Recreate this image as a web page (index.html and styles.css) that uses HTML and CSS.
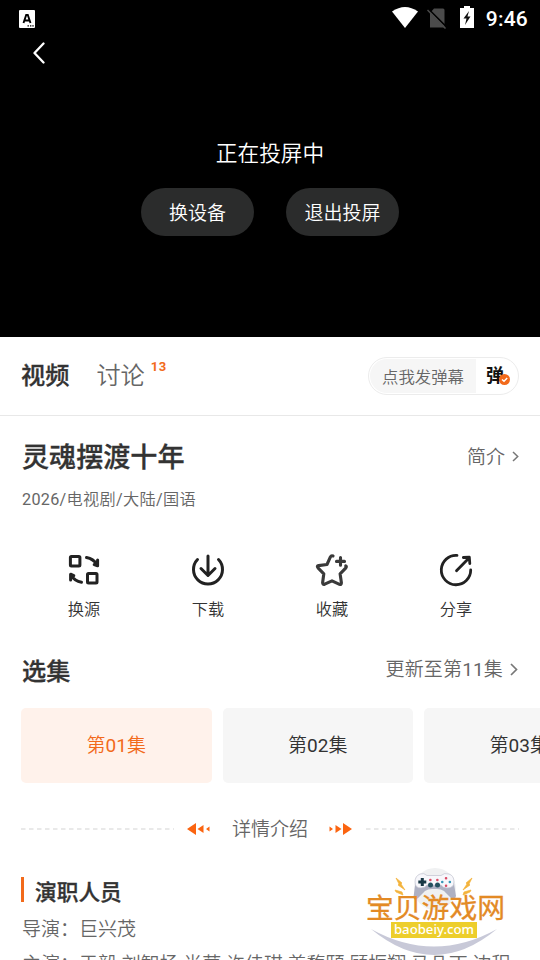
FILE: index.html
```html
<!DOCTYPE html>
<html lang="zh-CN">
<head>
<meta charset="utf-8">
<title>灵魂摆渡十年</title>
<link rel="stylesheet" href="styles.css">
</head>
<body>
<div class="screen">
  <section class="player">
    <header class="status">
      <svg class="status-app" width="16" height="18" viewBox="0 0 16 18"><rect width="16" height="18" rx="1" fill="#fff"/><path d="M4.500 13 7.200 5h1.600l2.700 8M5.800 10.500h4.400" fill="none" stroke="#000" stroke-width="1.900"/><path d="M8.500 15.800h1.400M11 15.800h1.400M13.300 15.800h1.400" stroke="#000" stroke-width="1.300"/></svg>
      <svg class="wifi" width="26" height="21" viewBox="0 0 26 21"><path d="M0 4.500Q13-4.500 26 4.500L13 21Z" fill="#fff"/></svg>
      <svg class="nosim" width="20" height="21" viewBox="0 0 20 21"><path d="M7 .5h9q1.500 0 1.500 1.500v17.500H3V5Z" fill="#4b4b4b"/><path d="M1.500 1 19.500 19" stroke="#000" stroke-width="1.600"/><path d="M.5 2 18.500 20.500" stroke="#4b4b4b" stroke-width="1.500"/></svg>
      <svg class="battery" width="14" height="22" viewBox="0 0 14 22"><path d="M4 0h6v2h4v20H0V2h4Z" fill="#fff"/><path d="M9 5 3.500 12.500h3L5 19l5.500-8.500h-3Z" fill="#111"/></svg>
      <span class="clock">9:46</span>
    </header>
    <svg class="back" width="14" height="22" viewBox="0 0 14 22"><path d="M11.500 1.500 2.500 11l9 9.500" fill="none" stroke="#fff" stroke-width="2.300" stroke-linecap="round" stroke-linejoin="round"/></svg>
    <div class="cast-title">正在投屏中</div>
    <div class="cast-buttons"><button>换设备</button><button>退出投屏</button></div>
  </section>

  <nav class="tabs">
    <b class="tab-active">视频</b><span class="tab">讨论</span><b class="count">13</b>
    <div class="danmu">
      <span class="danmu-input">点我发弹幕</span>
      <span class="danmu-switch"><b>弹</b><svg class="check" width="11" height="11" viewBox="0 0 11 11"><circle cx="5.500" cy="5.500" r="5.500" fill="#f26a1b"/><path d="m3 5.500 2 1.800L8.200 4" fill="none" stroke="#fff" stroke-width="1.400"/></svg></span>
    </div>
  </nav>

  <section class="heading">
    <h1>灵魂摆渡十年</h1>
    <span class="more">简介</span>
    <svg class="chevron" width="7" height="11" viewBox="0 0 7 11"><path d="m1 1 4.700 4.500L1 10" fill="none" stroke="#777" stroke-width="1.500"/></svg>
  </section>
  <p class="meta"><span class="num">2026/</span>电视剧<span class="num">/</span>大陆<span class="num">/</span>国语</p>

  <section class="actions">
    <div class="action"><svg width="34" height="34" viewBox="0 0 34 34" fill="none" stroke="#222" stroke-width="3" stroke-linecap="round" stroke-linejoin="round"><rect x="3.400" y="3.400" width="9.500" height="9.500" rx="1"/><rect x="20.500" y="20.500" width="9.500" height="9.500" rx="1"/><path d="M19.500 4.500Q26.500 6 29.500 11M30.600 7v5.800l-3.400-1.300M14.500 29.300Q7.500 28 4.500 22.500M3.600 27v-5.800l3.200 1.500"/></svg><span>换源</span></div>
    <div class="action"><svg width="34" height="34" viewBox="0 0 34 34" fill="none" stroke="#222" stroke-width="3" stroke-linecap="round" stroke-linejoin="round"><path d="M6.500 6.500A14.500 14.500 0 1 0 27.500 6.500M17 3v18.500M10 15.500l7 7 7-7"/></svg><span>下载</span></div>
    <div class="action"><svg width="34" height="34" viewBox="0 0 34 34" fill="none" stroke="#3a3a3a" stroke-width="3.100" stroke-linecap="round" stroke-linejoin="round"><path d="M18 3q-1.700-.8-2.600.9L12 11.500 3.400 12.600Q1.500 13 3 14.800l5.800 6-1.200 9q.1 2.200 2.100 1.400L17 27.800l7.500 3.500q2 .6 1.900-1.500l-1.300-9 5.800-6q1-1.300-.2-1.900M25.500 4.500v7.800M21.500 8.400h8"/></svg><span>收藏</span></div>
    <div class="action"><svg width="34" height="34" viewBox="0 0 34 34" fill="none" stroke="#222" stroke-width="2.800" stroke-linecap="round" stroke-linejoin="round"><path d="M18 2.400A14.700 14.700 0 1 0 31.700 17M17.500 17.800 30 5M24.300 4.500l6-.4.500 6.400"/></svg><span>分享</span></div>
  </section>

  <section class="episode-heading">
    <h2>选集</h2><span class="more">更新至第<span class="num">11</span>集</span>
    <svg class="chevron" width="8" height="13" viewBox="0 0 8 13"><path d="m1 1 5.500 5.500L1 12" fill="none" stroke="#777" stroke-width="1.700"/></svg>
  </section>
  <section class="episodes"><div class="episode selected">第<span class="num">01</span>集</div><div class="episode">第<span class="num">02</span>集</div><div class="episode">第<span class="num">03</span>集</div></section>

  <section class="divider">
    <svg width="153" height="2"><path d="M0 1h153" stroke="#e2e2e2" stroke-width="1.500" stroke-dasharray="4.500 3.500"/></svg>
    <svg class="arrow-left" width="23" height="12" viewBox="0 0 23 12" fill="#fb6410"><path d="M0 6 9 0v12ZM10.500 6l6-4v8ZM19 6l3.500-2.500v5Z"/></svg>
    <span>详情介绍</span>
    <svg class="arrow-right" width="23" height="12" viewBox="0 0 23 12" fill="#fb6410"><path d="M23 6 14 0v12ZM12.500 6l-6-4v8ZM4 6 .5 3.500v5Z"/></svg>
    <svg width="153" height="2"><path d="M0 1h153" stroke="#e2e2e2" stroke-width="1.500" stroke-dasharray="4.500 3.500"/></svg>
  </section>

  <aside class="watermark">
    <svg width="144" height="94" viewBox="0 0 144 94">
      <circle cx="70" cy="23" r="21" fill="#f0f1f2"/>
      <path d="M6 63Q69 115 132 63 69 98 6 63Z" fill="#c8c9d8"/>
      <path d="M54 10h31q4 4 4.500 11l1.500 9q-1 5-5 2l-7-7q-3-2-7-2h-5q-4 0-7 2l-7 7q-4 4-4.500-1L50 20q1-7 4-10Z" fill="#aeb1c3"/>
      <path d="M55 8q4-1.500 7 1.500h14Q79 6.500 84 8q5 1.500 5 8 0 6-7 6-4 0-6-3H62q-2 3-6 3-6 0-6-6 0-6 5-8Z" fill="#f7f7fb" stroke="#c0c2cf" stroke-width=".7"/>
      <path d="M57.300 12v8M53.300 16h8" stroke="#183845" stroke-width="3"/>
      <path d="M81 12.200h.1M81 19.800h.1M65.300 14h.1M72.300 14h.1" stroke="#d94a64" stroke-width="2.500" stroke-linecap="round"/>
      <path d="M77.200 16h.1M84.800 16h.1" stroke="#3897b8" stroke-width="2.500" stroke-linecap="round"/>
      <circle cx="65.500" cy="19" r="2.500" fill="#24505e"/><circle cx="72.500" cy="19" r="2.500" fill="#24505e"/>
      <path d="m31 12 6 5-1 1 4 6-7-5 1-1ZM30 24l7 2 1 3-7-3ZM107 12l-6 5 1 1-4 6 7-5-1-1ZM106 24l-7 2-1 3 7-3Z" fill="#f3b33c" stroke="#f3b33c" stroke-width=".7"/>
    </svg>
    <span class="brand">宝贝游戏网</span><span class="site">baobeiy.com</span>
  </aside>

  <section class="crew">
    <h3>演职人员</h3>
    <p>导演：巨兴茂</p>
    <p class="actors">主演：于毅 刘智扬 肖茵 许佳琪 姜馥颐 顾振翔 马凡丁 边程</p>
  </section>
</div>
</body>
</html>
```
FILE: styles.css
```css
* { box-sizing: border-box; }
body { margin: 0; background: #fff; color: #333; font-family: Roboto, "Noto Sans CJK SC", sans-serif; }
h1, h2, h3, p { margin: 0; }
h1, h2, h3, .tab-active { font-weight: 500; -webkit-text-stroke: .3px currentColor; }
svg { display: block; flex: none; }
.num { font-weight: 400; }
.screen { position: relative; width: 540px; height: 960px; overflow: hidden; background: #fff; }
.player { height: 337px; background: #000; color: #fff; }
.status { height: 37px; display: flex; align-items: center; padding: 0 12px 0 19px; }
.wifi { margin-left: auto; margin-right: 9px; margin-top: -3px; }
.nosim { margin-right: 13px; }
.battery { margin-right: 12px; margin-top: -3px; }
.clock { font-size: 21px; font-weight: 500; line-height: 36px; letter-spacing: .2px; }
.back { margin: 5px 0 0 32px; }
.cast-title { margin-top: 73px; text-align: center; font-size: 21.700px; line-height: 34px; font-weight: 350; }
.cast-buttons { display: flex; justify-content: center; gap: 32px; margin-top: 17px; }
.cast-buttons button { width: 113px; height: 48px; padding: 3px 0 0; border: 0; border-radius: 24px; background: #2b2c2c; color: #fff; font: inherit; font-weight: 350; font-size: 19px; line-height: 45px; }
.tabs { height: 79px; display: flex; align-items: center; padding: 0 21px; border-bottom: 1px solid #e8e8e8; white-space: nowrap; }
.tab-active, .tab { font-size: 24.200px; line-height: 36px; }
.tab { margin-left: 27px; color: #666; font-weight: 350; }
.count { margin: -18px 0 0 6px; color: #f26a1b; font-size: 13px; line-height: 16px; letter-spacing: .5px; }
.danmu { display: flex; width: 151px; height: 38px; margin-left: auto; border: 1px solid #ececec; border-radius: 19px; padding: 1px; overflow: hidden; }
.danmu-input { width: 106px; padding: 2px 0 0 12px; background: #f6f6f6; border-radius: 17px 0 0 17px; color: #666; font-size: 16.400px; line-height: 34px; font-weight: 350; }
.danmu-switch { position: relative; padding-left: 10px; color: #111; font-size: 18px; line-height: 34px; }
.check { position: absolute; left: 23px; top: 15px; }
.heading { height: 70px; padding: 14px 21px 0 22px; display: flex; align-items: center; }
h1 { font-size: 27.100px; line-height: 40px; }
.more { margin-left: auto; font-size: 19px; line-height: 28px; font-weight: 350; color: #666; }
.chevron { margin-left: 7px; }
.heading .chevron { margin-top: -4px; }
.meta { margin-top: 1px; padding-left: 22px; font-size: 16.200px; line-height: 26px; letter-spacing: .3px; font-weight: 350; color: #666; }
.actions { display: flex; margin: 40px 22px 0; }
.action { width: 124px; display: flex; flex-direction: column; align-items: center; font-size: 16.200px; line-height: 26px; font-weight: 350; color: #333; }
.action span { margin-top: 10px; }
.episode-heading { height: 36px; margin-top: 31px; padding: 0 22px; display: flex; align-items: center; }
h2 { font-size: 24.200px; line-height: 36px; }
.episode-heading .more { margin-top: -4px; letter-spacing: .15px; }
.episode-heading .chevron { margin-top: -6px; }
.episodes { display: flex; gap: 11px; margin: 18px 0 0 21px; width: 600px; }
.episode { width: 190.500px; height: 75px; border-radius: 5px; background: #f6f6f6; text-align: center; font-size: 19px; line-height: 75px; font-weight: 350; color: #333; }
.episode.selected { color: #f26a1b; background: #fff2eb; }
.divider { height: 30px; margin-top: 31px; padding: 0 21px; display: flex; align-items: center; font-size: 19px; line-height: 28px; font-weight: 350; color: #666; }
.divider span { padding-top: 2px; }
.arrow-left { margin-left: 13px; margin-right: 22px; }
.arrow-right { margin-left: 21px; margin-right: 14px; }
.crew { position: relative; padding: 32px 0 0 22px; white-space: nowrap; }
h3 { position: relative; padding-left: 13px; font-size: 21.700px; line-height: 34px; }
h3::before { content: ""; position: absolute; left: -1px; top: 1px; width: 3px; height: 25px; background: #f26a1b; }
.crew p { margin-top: 6px; font-size: 19px; line-height: 28px; font-weight: 350; color: #666; }
.crew .actors { margin-top: 7px; }
.watermark { position: absolute; left: 365px; top: 866px; width: 144px; height: 94px; }
.brand { position: absolute; left: 1px; top: 26px; font-size: 27.800px; line-height: 34px; font-weight: 400; -webkit-text-stroke: .3px currentColor; color: #e38a25; white-space: nowrap; }
.site { position: absolute; left: 26px; top: 56px; width: 86px; height: 16px; background: #edce2c; color: #fff; font: 500 13.200px/15px "Noto Sans", sans-serif; text-align: center; }
```
